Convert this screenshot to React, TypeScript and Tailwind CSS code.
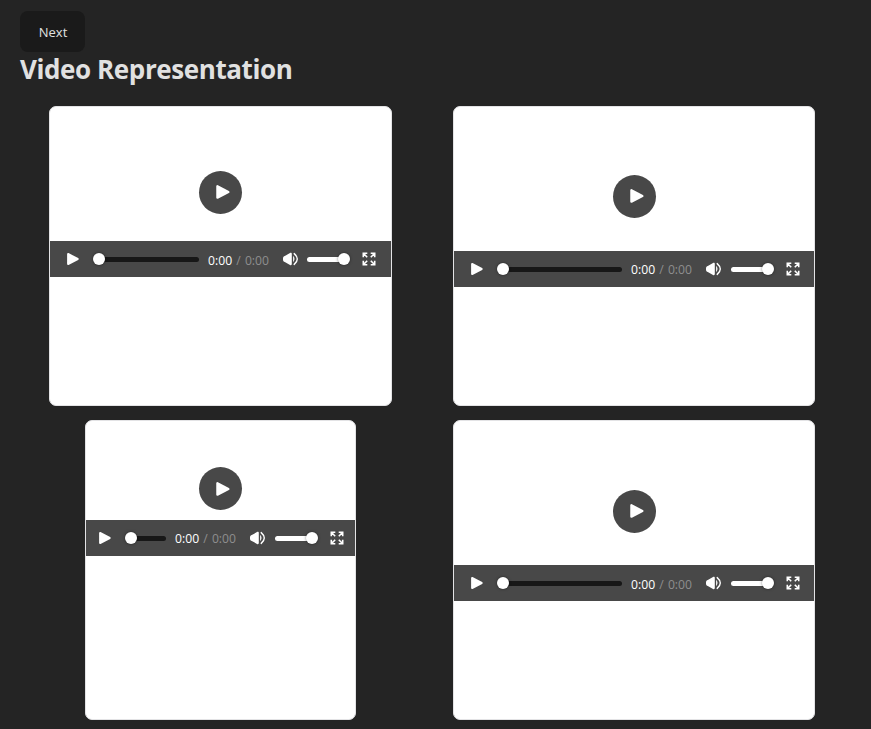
interface Clip {
  id: number;
  width: string;
  video: string;
  playOverlay: string;
  controls: string;
  time: string;
  slider: string;
}

const clips: Clip[] = [
  { id: 1, width: "w-[343px]", video: "h-[170px]", playOverlay: "", controls: "pl-4 pr-[15px]", time: "pt-[3px]", slider: "ml-2" },
  { id: 2, width: "w-[362px]", video: "h-[180px]", playOverlay: "pb-[2px]", controls: "pl-4 pr-[14px]", time: "pt-px", slider: "ml-[9px]" },
  { id: 3, width: "w-[271px]", video: "h-[135px]", playOverlay: "", controls: "pl-3 pr-[11px]", time: "pt-px", slider: "ml-[9px]" },
  { id: 4, width: "w-[362px]", video: "h-[180px]", playOverlay: "", controls: "pl-4 pr-[14px]", time: "pt-[3px]", slider: "ml-[9px]" },
];

function PlayIcon({ className }: { className: string }) {
  return (
    <svg viewBox="0 0 14 14" className={className} fill="#fff" stroke="#fff" strokeWidth="2" strokeLinejoin="round">
      <path d="M2.1 2v10L11.7 7z" />
    </svg>
  );
}

function VolumeIcon() {
  return (
    <svg viewBox="0 0 16 14" className="h-[14px] w-4 shrink-0">
      <path d="M0 6.2C0 5 .8 4.3 1.8 4L7 1.1c.9-.5 1.8-.2 1.8.8v10.2c0 1-.9 1.3-1.8.8L1.8 10C.8 9.7 0 9 0 7.8z" fill="#fff" />
      <path d="M10.1 3.8q2.8 3.2 0 6.4z" fill="#fff" />
      <path d="M11.2 1.6q6.2 5.4 0 10.8" fill="none" stroke="#fff" strokeWidth="1.4" strokeLinecap="round" />
    </svg>
  );
}

function FullscreenIcon() {
  return (
    <svg viewBox="0 0 14 14" className="size-[14px] shrink-0" fill="none" stroke="#fff" strokeWidth="1.6">
      <path d="M1.3 5.3v-4h4M8.7 1.3h4v4M12.7 8.7v4h-4M5.3 12.7h-4v-4M1.8 1.8l3.4 3.4M12.2 1.8 8.8 5.2M12.2 12.2 8.8 8.8M1.8 12.2l3.4-3.4" />
    </svg>
  );
}

function Knob() {
  return <span className="z-10 block size-3 shrink-0 rounded-full bg-white shadow-[0_0_3px_rgba(0,0,0,0.5)]" />;
}

function Controls({ clip }: { clip: Clip }) {
  return (
    <div className={`flex h-9 w-full shrink-0 items-center bg-[#484848] ${clip.controls}`}>
      <PlayIcon className="size-[14px] shrink-0" />
      <div className="ml-[13px] flex flex-1 items-center">
        <Knob />
        <span className="-ml-1 h-[5px] flex-1 rounded-r-full bg-[#171717]" />
      </div>
      <div className={`ml-[9px] flex w-[61px] shrink-0 justify-between text-[12.2px] leading-4 text-white ${clip.time}`}>
        <span>0:00</span>
        <span className="text-[#8e8e8e]">/</span>
        <span className="text-[#8e8e8e]">0:00</span>
      </div>
      <div className="ml-[14px] flex shrink-0">
        <VolumeIcon />
      </div>
      <div className={`flex w-[43px] shrink-0 items-center ${clip.slider}`}>
        <span className="-mr-1 h-[5px] flex-1 rounded-l-full bg-white" />
        <Knob />
      </div>
      <div className="ml-3 flex shrink-0">
        <FullscreenIcon />
      </div>
    </div>
  );
}

function VideoCard({ clip }: { clip: Clip }) {
  return (
    <div className={`h-[300px] overflow-hidden rounded-[7px] border border-[#e3e3e5] bg-white ${clip.width}`}>
      <div className={`relative flex flex-col justify-end ${clip.video}`}>
        <div className={`absolute inset-0 flex items-center justify-center ${clip.playOverlay}`}>
          <button className="flex size-[43px] items-center justify-center rounded-full bg-[#484848]">
            <PlayIcon className="ml-[5px] size-4" />
          </button>
        </div>
        <Controls clip={clip} />
      </div>
    </div>
  );
}

export default function App() {
  return (
    <main className="h-[729px] overflow-hidden bg-[#242424] pl-5 pt-[11px] font-['Open_Sans','Noto_Sans',sans-serif] text-[#e1e1e1]">
      <button className="block h-[41px] w-[65px] rounded-lg bg-[#1a1a1a] pl-px pt-[2px] text-[13px]">Next</button>
      <h1 className="h-[54px] whitespace-nowrap text-[26px] font-bold leading-[34px] tracking-[-0.4px]">Video Representation</h1>
      <div className="grid grid-cols-[401px_402px] justify-items-center gap-x-3 gap-y-[14px]">
        {clips.map((clip) => (
          <VideoCard key={clip.id} clip={clip} />
        ))}
      </div>
    </main>
  );
}
